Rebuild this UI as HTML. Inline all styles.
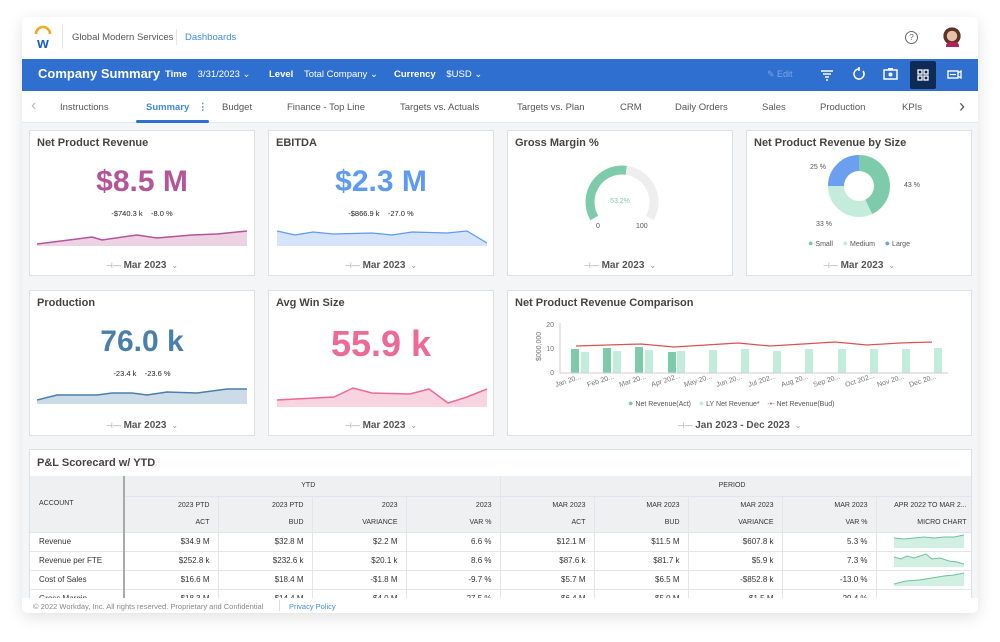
<!DOCTYPE html>
<html><head><meta charset="utf-8"><style>
*{margin:0;padding:0;box-sizing:border-box}
body{width:1000px;height:642px;background:#fff;font-family:"Liberation Sans",sans-serif;position:relative;overflow:hidden;color:#333}
.a{position:absolute}
.shell{left:22px;top:17px;width:956px;height:596px;background:#f4f5f6;box-shadow:0 4px 16px rgba(0,0,0,.12);border-radius:6px;overflow:hidden}
.card{position:absolute;background:#fff;border:1px solid #dde0e4}
.ct{position:absolute;left:7px;top:6px;font-size:11px;font-weight:bold;color:#444}
.big{position:absolute;left:0;right:0;text-align:center;font-weight:bold;font-size:30px}
.sub{position:absolute;left:0;right:0;text-align:center;font-size:7.5px;color:#222}
.dd{position:absolute;left:0;right:0;text-align:center;font-size:10px;color:#555;font-weight:bold}
.dd span{font-weight:normal;color:#999;font-size:8px}
.tab{position:absolute;top:102px;font-size:9.5px;color:#555}
table{border-collapse:collapse;font-size:8px;color:#333;table-layout:fixed}
td{height:19px;border-right:1px solid #e3e5e8;border-bottom:1px solid #e3e5e8;text-align:right;padding-right:8px;white-space:nowrap;overflow:hidden}
</style></head><body>
<div class="a shell"></div>
<div class="a" style="left:22px;top:17px;width:956px;height:42px;background:#fff;border-radius:6px 6px 0 0"></div>
<svg class="a" style="left:33px;top:25px" width="20" height="24" viewBox="0 0 20 24"><path d="M3 9 A7 7 0 0 1 17 9" fill="none" stroke="#f5a623" stroke-width="2.6"/><text x="10" y="23" text-anchor="middle" font-family="Liberation Sans" font-weight="bold" font-size="15" fill="#1b5fc1">w</text></svg>
<div class="a" style="left:62px;top:25px;width:1px;height:24px;background:#e5e5e5"></div>
<div class="a" style="left:72px;top:32px;font-size:9.5px;color:#555">Global Modern Services</div>
<div class="a" style="left:176px;top:29px;width:1px;height:16px;background:#e5e5e5"></div>
<div class="a" style="left:185px;top:32px;font-size:9.5px;color:#3d8be0">Dashboards</div>
<div class="a" style="left:905px;top:31px;width:13px;height:13px;border:1.3px solid #666;border-radius:50%;font-size:8px;text-align:center;line-height:11px;color:#666">?</div>
<div class="a" style="left:943px;top:27px;width:18px;height:20px;border-radius:50%;background:radial-gradient(circle at 50% 45%,#e8c0a8 0 35%,#5a3424 38% 60%,#fff 62%)"></div>
<div class="a" style="left:946px;top:42px;width:13px;height:5px;background:#b0245a;border-radius:4px 4px 0 0"></div>
<div class="a" style="left:22px;top:59px;width:956px;height:32px;background:#2f6fcf"></div>
<div class="a" style="left:38px;top:66px;font-size:13px;font-weight:bold;color:#fff">Company Summary</div>
<div class="a" style="left:165px;top:69px;font-size:9.5px;color:#fff;font-weight:bold">Time <span style="font-weight:normal;margin-left:8px">3/31/2023 &#8964;</span></div>
<div class="a" style="left:269px;top:69px;font-size:9.5px;color:#fff;font-weight:bold">Level <span style="font-weight:normal;margin-left:8px">Total Company &#8964;</span></div>
<div class="a" style="left:394px;top:69px;font-size:9.5px;color:#fff;font-weight:bold">Currency <span style="font-weight:normal;margin-left:8px">$USD &#8964;</span></div>
<div class="a" style="left:767px;top:69px;font-size:9px;color:#7ea6e6">&#9998; Edit</div>
<svg class="a" style="left:820px;top:69px" width="14" height="12"><path d="M1 2H13M3 5H11M5 8H9M6 11H8" stroke="#fff" stroke-width="1.6"/></svg>
<svg class="a" style="left:852px;top:67px" width="14" height="14"><path d="M7 2A5 5 0 1 0 11 4" fill="none" stroke="#fff" stroke-width="1.6"/><path d="M7 0V4" stroke="#fff" stroke-width="1.6"/></svg>
<svg class="a" style="left:883px;top:68px" width="15" height="12"><rect x="1" y="2" width="13" height="9" fill="none" stroke="#fff" stroke-width="1.5"/><circle cx="7.5" cy="6.5" r="2" fill="#fff"/><rect x="5" y="0" width="5" height="2" fill="#fff"/></svg>
<div class="a" style="left:910px;top:61px;width:26px;height:28px;background:#0f2a55;border-radius:2px"></div>
<svg class="a" style="left:917px;top:69px" width="12" height="12"><g fill="none" stroke="#fff" stroke-width="1.3"><rect x="1" y="1" width="4" height="4"/><rect x="7" y="1" width="4" height="4"/><rect x="1" y="7" width="4" height="4"/><rect x="7" y="7" width="4" height="4"/></g></svg>
<svg class="a" style="left:947px;top:70px" width="15" height="9"><rect x="1" y="1" width="10" height="7" fill="none" stroke="#fff" stroke-width="1.4"/><path d="M3 4.5H9M11 3L14 1V8L11 6" stroke="#fff" stroke-width="1.3" fill="none"/></svg>
<div class="a" style="left:22px;top:91px;width:956px;height:32px;background:#fff;border-bottom:1px solid #e6e7e9"></div>
<div class="a" style="left:31px;top:97px;font-size:16px;color:#bbb">&#8249;</div>
<div class="a" style="left:959px;top:96px;font-size:18px;color:#555">&#8250;</div>
<div class="tab" style="left:60px">Instructions</div>
<div class="tab" style="left:146px;color:#3d8be0;font-weight:bold">Summary <span style="margin-left:6px">&#8942;</span></div>
<div class="a" style="left:136px;top:120px;width:73px;height:3px;background:#2f6fcf;border-radius:2px"></div>
<div class="tab" style="left:222px">Budget</div>
<div class="tab" style="left:287px">Finance - Top Line</div>
<div class="tab" style="left:400px">Targets vs. Actuals</div>
<div class="tab" style="left:517px">Targets vs. Plan</div>
<div class="tab" style="left:620px">CRM</div>
<div class="tab" style="left:675px">Daily Orders</div>
<div class="tab" style="left:762px">Sales</div>
<div class="tab" style="left:820px">Production</div>
<div class="tab" style="left:902px">KPIs</div>

<div class="card" style="left:29px;top:130px;width:226px;height:146px">
 <div class="ct">Net Product Revenue</div>
 <div class="big" style="top:34px;color:#b4559a">$8.5 M</div>
 <div class="sub" style="top:78px">-$740.3 k &nbsp;&nbsp; -8.0 %</div>
 <svg class="a" style="left:7px;top:93px" width="212" height="22"><path d="M0 20L40 15L55 13L65 16L100 11L120 14L155 11L180 10L210 7V22H0Z" fill="#ecd2e3"/><path d="M0 20L40 15L55 13L65 16L100 11L120 14L155 11L180 10L210 7" fill="none" stroke="#b4559a" stroke-width="1.5"/></svg>
 <div class="dd" style="top:129px"><span>&#8867;&#8212;</span> Mar 2023 <span>&nbsp;&#8964;</span></div>
</div>
<div class="card" style="left:268px;top:130px;width:226px;height:146px">
 <div class="ct">EBITDA</div>
 <div class="big" style="top:34px;color:#5d9af0">$2.3 M</div>
 <div class="sub" style="top:78px">-$866.9 k &nbsp;&nbsp; -27.0 %</div>
 <svg class="a" style="left:8px;top:93px" width="212" height="22"><path d="M0 7L18 11L36 8L56 10L95 9L115 11L135 8L170 9L190 7L210 19V22H0Z" fill="#d6e4fb"/><path d="M0 7L18 11L36 8L56 10L95 9L115 11L135 8L170 9L190 7L210 19" fill="none" stroke="#5d9af0" stroke-width="1.3"/></svg>
 <div class="dd" style="top:129px"><span>&#8867;&#8212;</span> Mar 2023 <span>&nbsp;&#8964;</span></div>
</div>
<div class="card" style="left:507px;top:130px;width:226px;height:146px">
 <div class="ct">Gross Margin %</div>
 <svg class="a" style="left:0;top:0" width="226" height="110"><path d="M86.3 87A32 32 0 0 1 118.3 39.3" fill="none" stroke="#7ecbac" stroke-width="9"/><path d="M118.3 39.3A32 32 0 0 1 141.7 87" fill="none" stroke="#eeeeee" stroke-width="9"/></svg>
 <div class="a" style="left:0;right:0;top:67px;text-align:center;font-size:7px;color:#7ecbac">53.2%</div>
 <div class="a" style="left:88px;top:92px;font-size:7px;color:#555">0</div>
 <div class="a" style="left:128px;top:92px;font-size:7px;color:#555">100</div>
 <div class="dd" style="top:129px"><span>&#8867;&#8212;</span> Mar 2023 <span>&nbsp;&#8964;</span></div>
</div>
<div class="card" style="left:746px;top:130px;width:226px;height:146px">
 <div class="ct">Net Product Revenue by Size</div>
 <svg class="a" style="left:0;top:0" width="226" height="110"><g fill="none" stroke-width="16"><circle cx="112" cy="55" r="23" stroke="#c4ecdc"/><path d="M112 32A23 23 0 0 1 121.8 75.8" stroke="#7ecbac"/><path d="M89 55A23 23 0 0 1 112 32" stroke="#6b9ff0"/></g></svg>
 <div class="a" style="left:63px;top:33px;font-size:7px;color:#555">25 %</div>
 <div class="a" style="left:157px;top:51px;font-size:7px;color:#555">43 %</div>
 <div class="a" style="left:69px;top:90px;font-size:7px;color:#555">33 %</div>
 <div class="a" style="left:0;right:0;text-align:center;top:107px;font-size:7px;color:#555"><span style="color:#7ecbac;font-size:9px">&#9679;</span> Small &nbsp;&nbsp;&nbsp; <span style="color:#c4ecdc;font-size:9px">&#9679;</span> Medium &nbsp;&nbsp;&nbsp; <span style="color:#6b9ff0;font-size:9px">&#9679;</span> Large</div>
 <div class="dd" style="top:129px"><span>&#8867;&#8212;</span> Mar 2023 <span>&nbsp;&#8964;</span></div>
</div>

<div class="card" style="left:29px;top:290px;width:226px;height:146px">
 <div class="ct">Production</div>
 <div class="big" style="top:34px;color:#4a7fab">76.0 k</div>
 <div class="sub" style="top:78px">-23.4 k &nbsp;&nbsp; -23.6 %</div>
 <svg class="a" style="left:7px;top:95px" width="212" height="22"><path d="M0 14L20 9L60 9L75 7L95 7L110 9L130 6L160 7L190 3L210 3V18H0Z" fill="#cbdbe8"/><path d="M0 14L20 9L60 9L75 7L95 7L110 9L130 6L160 7L190 3L210 3" fill="none" stroke="#4a7fab" stroke-width="1.5"/></svg>
 <div class="dd" style="top:129px"><span>&#8867;&#8212;</span> Mar 2023 <span>&nbsp;&#8964;</span></div>
</div>
<div class="card" style="left:268px;top:290px;width:226px;height:146px">
 <div class="ct">Avg Win Size</div>
 <div class="big" style="top:32px;color:#ec6a94;font-size:36px">55.9 k</div>
 <svg class="a" style="left:8px;top:95px" width="212" height="22"><path d="M0 14L57 11L76 2L95 7L133 8L152 3L171 17L190 11L210 3V21H0Z" fill="#f8d3e0"/><path d="M0 14L57 11L76 2L95 7L133 8L152 3L171 17L190 11L210 3" fill="none" stroke="#ec6a94" stroke-width="1.5"/></svg>
 <div class="dd" style="top:129px"><span>&#8867;&#8212;</span> Mar 2023 <span>&nbsp;&#8964;</span></div>
</div>
<div class="card" style="left:507px;top:290px;width:465px;height:146px">
 <div class="ct">Net Product Revenue Comparison</div>
 <svg class="a" style="left:0;top:0" width="465" height="110" font-family="Liberation Sans" font-size="7" fill="#777">
  <text x="46" y="36" text-anchor="end">20</text><text x="46" y="60" text-anchor="end">10</text><text x="46" y="84" text-anchor="end">0</text>
  <text transform="translate(33 70) rotate(-90)">$000,000</text>
  <path d="M52 32V82H332" stroke="#ccc" fill="none"/>
  <g fill="#7ecbac"><rect x="63" y="58" width="8" height="24"/><rect x="95" y="57" width="8" height="25"/><rect x="127" y="56" width="8" height="26"/><rect x="160" y="61" width="8" height="21"/></g>
  <g fill="#c4ecdc"><rect x="73" y="61" width="8" height="21"/><rect x="105" y="60" width="8" height="22"/><rect x="137" y="59" width="8" height="23"/><rect x="169" y="60" width="8" height="22"/><rect x="201" y="59" width="8" height="23"/><rect x="233" y="58" width="8" height="24"/><rect x="265" y="60" width="8" height="22"/><rect x="297" y="58" width="8" height="24"/><rect x="330" y="58" width="8" height="24"/><rect x="362" y="58" width="8" height="24"/><rect x="394" y="58" width="8" height="24"/><rect x="426" y="57" width="8" height="25"/></g>
  <path d="M52 82H440" stroke="#ccc"/>
  <path d="M68 55L100 54L133 53L166 56L198 54L230 52L262 55L295 53L327 51L359 54L392 52L424 51" stroke="#d9534f" stroke-width="1.2" fill="none"/>
  <g><text transform="translate(48 96) rotate(-18)">Jan 20...</text><text transform="translate(80 96) rotate(-18)">Feb 20...</text><text transform="translate(112 96) rotate(-18)">Mar 20...</text><text transform="translate(144 96) rotate(-18)">Apr 202...</text><text transform="translate(177 96) rotate(-18)">May 20...</text><text transform="translate(209 96) rotate(-18)">Jun 20...</text><text transform="translate(241 96) rotate(-18)">Jul 202...</text><text transform="translate(274 96) rotate(-18)">Aug 20...</text><text transform="translate(306 96) rotate(-18)">Sep 20...</text><text transform="translate(338 96) rotate(-18)">Oct 202...</text><text transform="translate(370 96) rotate(-18)">Nov 20...</text><text transform="translate(402 96) rotate(-18)">Dec 20...</text></g>
 </svg>
 <div class="a" style="left:120px;top:107px;font-size:7px;color:#555"><span style="color:#7ecbac;font-size:9px">&#9679;</span> Net Revenue(Act) &nbsp;&nbsp; <span style="color:#c4ecdc;font-size:9px">&#9679;</span> LY Net Revenue* &nbsp;&nbsp; <span style="color:#d9534f">-•-</span> Net Revenue(Bud)</div>
 <div class="dd" style="top:129px"><span>&#8867;&#8212;</span> Jan 2023 - Dec 2023 <span>&nbsp;&#8964;</span></div>
</div>

<div class="card" style="left:29px;top:449px;width:943px;height:160px;overflow:hidden">
 <div class="ct" style="top:7px">P&amp;L Scorecard w/ YTD</div>
 <table class="a" style="left:0;top:26px;width:942px">
  <colgroup><col style="width:94px"><col style="width:94px"><col style="width:94px"><col style="width:94px"><col style="width:94px"><col style="width:94px"><col style="width:94px"><col style="width:94px"><col style="width:94px"><col style="width:96px"></colgroup>
  <tr style="background:#eff0f2;height:20px"><td rowspan="2" style="text-align:left;padding-left:9px;border-right:2px solid #aaa;font-size:7px">ACCOUNT</td><td colspan="4" style="text-align:center;font-size:7px">YTD</td><td colspan="5" style="text-align:center;font-size:7px">PERIOD</td></tr>
  <tr style="background:#eff0f2;height:36px;font-size:7px;line-height:17px"><td>2023 PTD<br>ACT</td><td>2023 PTD<br>BUD</td><td>2023<br>VARIANCE</td><td>2023<br>VAR %</td><td>MAR 2023<br>ACT</td><td>MAR 2023<br>BUD</td><td>MAR 2023<br>VARIANCE</td><td>MAR 2023<br>VAR %</td><td style="padding-right:5px">APR 2022 TO MAR 2...<br>MICRO CHART</td></tr>
  <tr><td style="text-align:left;padding-left:9px;border-right:2px solid #aaa">Revenue</td><td>$34.9 M</td><td>$32.8 M</td><td>$2.2 M</td><td>6.6 %</td><td>$12.1 M</td><td>$11.5 M</td><td>$607.8 k</td><td>5.3 %</td><td><svg width="70" height="15"><path d="M0 5L10 6L20 5L30 4L40 5L50 4L60 4L70 2V15H0Z" fill="#d2efe3"/><path d="M0 5L10 6L20 5L30 4L40 5L50 4L60 4L70 2" stroke="#6cc29f" fill="none"/></svg></td></tr>
  <tr><td style="text-align:left;padding-left:9px;border-right:2px solid #aaa">Revenue per FTE</td><td>$252.8 k</td><td>$232.6 k</td><td>$20.1 k</td><td>8.6 %</td><td>$87.6 k</td><td>$81.7 k</td><td>$5.9 k</td><td>7.3 %</td><td><svg width="70" height="15"><path d="M0 5L7 7L13 4L20 6L32 2L38 7L46 6L55 9L63 10L70 12V15H0Z" fill="#d2efe3"/><path d="M0 5L7 7L13 4L20 6L32 2L38 7L46 6L55 9L63 10L70 12" stroke="#6cc29f" fill="none"/></svg></td></tr>
  <tr><td style="text-align:left;padding-left:9px;border-right:2px solid #aaa">Cost of Sales</td><td>$16.6 M</td><td>$18.4 M</td><td>-$1.8 M</td><td>-9.7 %</td><td>$5.7 M</td><td>$6.5 M</td><td>-$852.8 k</td><td>-13.0 %</td><td><svg width="70" height="15"><path d="M0 13L12 10L25 9L38 7L50 5L60 4L70 2V15H0Z" fill="#d2efe3"/><path d="M0 13L12 10L25 9L38 7L50 5L60 4L70 2" stroke="#6cc29f" fill="none"/></svg></td></tr>
  <tr><td style="text-align:left;padding-left:9px;border-right:2px solid #aaa">Gross Margin</td><td>$18.3 M</td><td>$14.4 M</td><td>$4.0 M</td><td>27.5 %</td><td>$6.4 M</td><td>$5.0 M</td><td>$1.5 M</td><td>29.4 %</td><td></td></tr>
 </table>
</div>
<div class="a" style="left:22px;top:598px;width:956px;height:15px;background:#fff;border-radius:0 0 6px 6px"></div>
<div class="a" style="left:33px;top:602px;font-size:7.5px;color:#888">© 2022 Workday, Inc. All rights reserved. Proprietary and Confidential</div>
<div class="a" style="left:279px;top:600px;width:1px;height:11px;background:#ddd"></div>
<div class="a" style="left:289px;top:602px;font-size:7.5px;color:#3d8be0">Privacy Policy</div>
</body></html>
